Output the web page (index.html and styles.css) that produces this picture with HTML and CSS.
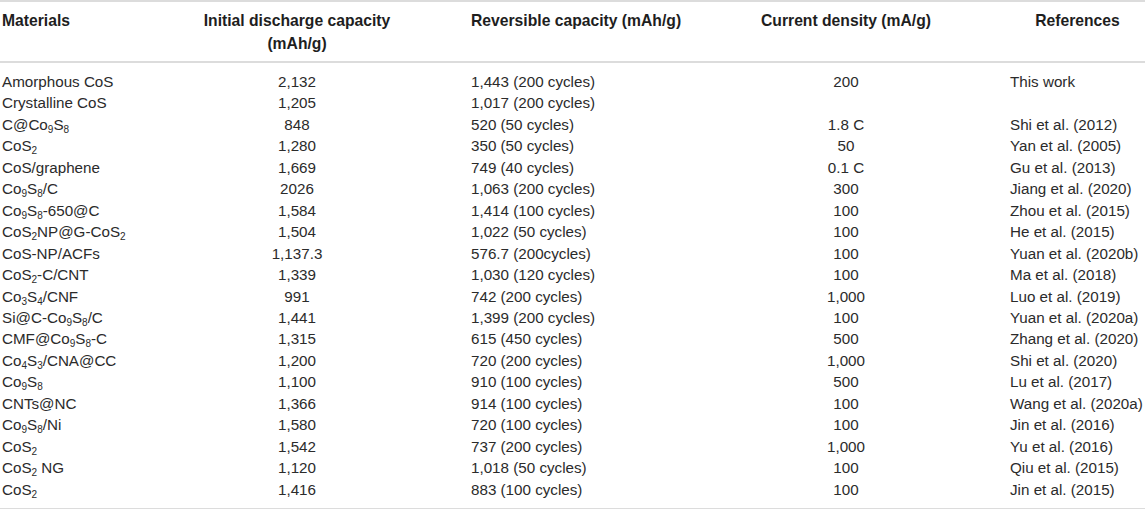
FILE: index.html
```html
<!DOCTYPE html>
<html>
<head>
<meta charset="utf-8">
<link rel="stylesheet" href="styles.css">
</head>
<body>
<table class="data">
  <colgroup>
    <col class="c-mat"><col class="c-init"><col class="c-rev"><col class="c-cur"><col class="c-ref">
  </colgroup>
  <thead>
    <tr>
      <th class="mat">Materials</th>
      <th class="init">Initial discharge capacity (mAh/g)</th>
      <th class="rev">Reversible capacity (mAh/g)</th>
      <th class="cur">Current density (mA/g)</th>
      <th class="ref">References</th>
    </tr>
  </thead>
  <tbody>
    <tr><td class="mat">Amorphous CoS</td><td class="init">2,132</td><td class="rev">1,443 (200 cycles)</td><td class="cur">200</td><td class="ref">This work</td></tr>
    <tr><td class="mat">Crystalline CoS</td><td class="init">1,205</td><td class="rev">1,017 (200 cycles)</td><td class="cur"></td><td class="ref"></td></tr>
    <tr><td class="mat">C@Co<sub>9</sub>S<sub>8</sub></td><td class="init">848</td><td class="rev">520 (50 cycles)</td><td class="cur">1.8 C</td><td class="ref">Shi et al. (2012)</td></tr>
    <tr><td class="mat">CoS<sub>2</sub></td><td class="init">1,280</td><td class="rev">350 (50 cycles)</td><td class="cur">50</td><td class="ref">Yan et al. (2005)</td></tr>
    <tr><td class="mat">CoS/graphene</td><td class="init">1,669</td><td class="rev">749 (40 cycles)</td><td class="cur">0.1 C</td><td class="ref">Gu et al. (2013)</td></tr>
    <tr><td class="mat">Co<sub>9</sub>S<sub>8</sub>/C</td><td class="init">2026</td><td class="rev">1,063 (200 cycles)</td><td class="cur">300</td><td class="ref">Jiang et al. (2020)</td></tr>
    <tr><td class="mat">Co<sub>9</sub>S<sub>8</sub>-650@C</td><td class="init">1,584</td><td class="rev">1,414 (100 cycles)</td><td class="cur">100</td><td class="ref">Zhou et al. (2015)</td></tr>
    <tr><td class="mat">CoS<sub>2</sub>NP@G-CoS<sub>2</sub></td><td class="init">1,504</td><td class="rev">1,022 (50 cycles)</td><td class="cur">100</td><td class="ref">He et al. (2015)</td></tr>
    <tr><td class="mat">CoS-NP/ACFs</td><td class="init">1,137.3</td><td class="rev">576.7 (200cycles)</td><td class="cur">100</td><td class="ref">Yuan et al. (2020b)</td></tr>
    <tr><td class="mat">CoS<sub>2</sub>-C/CNT</td><td class="init">1,339</td><td class="rev">1,030 (120 cycles)</td><td class="cur">100</td><td class="ref">Ma et al. (2018)</td></tr>
    <tr><td class="mat">Co<sub>3</sub>S<sub>4</sub>/CNF</td><td class="init">991</td><td class="rev">742 (200 cycles)</td><td class="cur">1,000</td><td class="ref">Luo et al. (2019)</td></tr>
    <tr><td class="mat">Si@C-Co<sub>9</sub>S<sub>8</sub>/C</td><td class="init">1,441</td><td class="rev">1,399 (200 cycles)</td><td class="cur">100</td><td class="ref">Yuan et al. (2020a)</td></tr>
    <tr><td class="mat">CMF@Co<sub>9</sub>S<sub>8</sub>-C</td><td class="init">1,315</td><td class="rev">615 (450 cycles)</td><td class="cur">500</td><td class="ref">Zhang et al. (2020)</td></tr>
    <tr><td class="mat">Co<sub>4</sub>S<sub>3</sub>/CNA@CC</td><td class="init">1,200</td><td class="rev">720 (200 cycles)</td><td class="cur">1,000</td><td class="ref">Shi et al. (2020)</td></tr>
    <tr><td class="mat">Co<sub>9</sub>S<sub>8</sub></td><td class="init">1,100</td><td class="rev">910 (100 cycles)</td><td class="cur">500</td><td class="ref">Lu et al. (2017)</td></tr>
    <tr><td class="mat">CNTs@NC</td><td class="init">1,366</td><td class="rev">914 (100 cycles)</td><td class="cur">100</td><td class="ref">Wang et al. (2020a)</td></tr>
    <tr><td class="mat">Co<sub>9</sub>S<sub>8</sub>/Ni</td><td class="init">1,580</td><td class="rev">720 (100 cycles)</td><td class="cur">100</td><td class="ref">Jin et al. (2016)</td></tr>
    <tr><td class="mat">CoS<sub>2</sub></td><td class="init">1,542</td><td class="rev">737 (200 cycles)</td><td class="cur">1,000</td><td class="ref">Yu et al. (2016)</td></tr>
    <tr><td class="mat">CoS<sub>2</sub> NG</td><td class="init">1,120</td><td class="rev">1,018 (50 cycles)</td><td class="cur">100</td><td class="ref">Qiu et al. (2015)</td></tr>
    <tr><td class="mat">CoS<sub>2</sub></td><td class="init">1,416</td><td class="rev">883 (100 cycles)</td><td class="cur">100</td><td class="ref">Jin et al. (2015)</td></tr>
  </tbody>
</table>
</body>
</html>
```

FILE: styles.css
```css
html, body {
  margin: 0;
  padding: 0;
  background: #ffffff;
}

body {
  width: 1145px;
  height: 509px;
  overflow: hidden;
  font-family: "Liberation Sans", Arial, sans-serif;
  font-size: 15.2px;
  color: #2b2b2b;
}

.data {
  width: 1145px;
  table-layout: fixed;
  border-collapse: collapse;
  border-top: 2px solid #dcdcdc;
  border-bottom: 2px solid #dcdcdc;
}

.c-mat { width: 200px; }
.c-init { width: 194px; }
.c-rev { width: 288px; }
.c-cur { width: 328px; }
.c-ref { width: 135px; }

.data th,
.data td {
  padding: 0;
  vertical-align: top;
  white-space: nowrap;
}

.data th {
  font-size: 15.7px;
  font-weight: bold;
  color: #1e1e1e;
  line-height: 23px;
  padding-top: 7px;
  padding-bottom: 6px;
  border-bottom: 2px solid #dcdcdc;
  white-space: normal;
}

.data td {
  line-height: 21.45px;
}

.data tbody tr:first-child td {
  padding-top: 8px;
}

.data tbody tr:last-child td {
  padding-bottom: 8px;
}

.mat {
  text-align: left;
  padding-left: 2px !important;
}

.init {
  text-align: center;
}

.rev {
  text-align: left;
  padding-left: 77px !important;
}

.cur {
  text-align: center;
}

.data th.ref {
  text-align: center;
}

.data td.ref {
  text-align: left;
}

sub {
  font-size: 10px;
  line-height: 0;
  vertical-align: -3px;
}
```
